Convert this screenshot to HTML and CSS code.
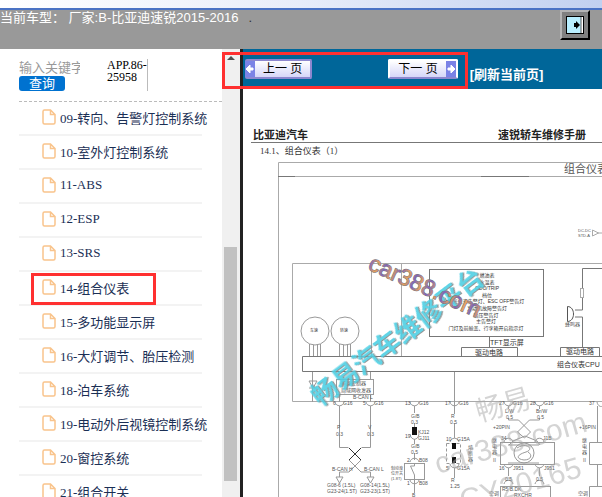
FILE: index.html
```html
<!DOCTYPE html>
<html lang="zh-CN">
  <head>
    <title>比亚迪速锐 - 组合仪表</title>
    <meta charset="UTF-8" />
    <meta name="viewport" content="width=device-width, initial-scale=1.0" />
    <link rel="stylesheet" href="styles.css">
  </head>
  <body>
    <svg width="0" height="0" class="defs">
      <symbol id="file" viewBox="0 0 14 16">
        <path d="M2.5 1h6L13 5.500V13.500a1.500 1.500 0 0 1-1.500 1.500h-9A1.500 1.500 0 0 1 1 13.500v-11A1.500 1.500 0 0 1 2.500 1zM8.500 1v4.500H13" fill="none" stroke="#f9c48c" stroke-width="1.500" />
      </symbol>
    </svg>

    <div class="strip"></div>
    <header class="header">
      <span class="car">当前车型： 厂家:B-比亚迪速锐2015-2016</span>
      <span class="dot">.</span>
      <button class="exit" aria-label="退出">
        <svg width="18" height="18" viewBox="0 0 18 18">
          <rect width="18" height="18" fill="#000" />
          <rect x="1" y="1" width="14" height="16" fill="#b9efff" />
          <rect x="15" y="1" width="2" height="16" fill="#fff" />
          <path d="M15 1v16" stroke="#555" />
          <path d="M8 7h2V5l4 4-4 4v-2H8z" fill="#000" />
        </svg>
      </button>
    </header>

    <div class="frames">
      <aside class="sidebar">
        <div class="menu">
          <form class="search">
            <div class="search-box">
              <input type="text" aria-label="关键字" placeholder="输入关键字" />
              <button type="button">查询</button>
            </div>
            <div class="app">APP.86-<br />25958</div>
          </form>
          <ul class="list">
            <li><a href="#"><svg><use href="#file" /></svg>09-转向、告警灯控制系统</a></li>
            <li><a href="#"><svg><use href="#file" /></svg>10-室外灯控制系统</a></li>
            <li><a href="#"><svg><use href="#file" /></svg>11-ABS</a></li>
            <li><a href="#"><svg><use href="#file" /></svg>12-ESP</a></li>
            <li><a href="#"><svg><use href="#file" /></svg>13-SRS</a></li>
            <li class="marked"><a href="#"><svg><use href="#file" /></svg>14-组合仪表</a></li>
            <li><a href="#"><svg><use href="#file" /></svg>15-多功能显示屏</a></li>
            <li><a href="#"><svg><use href="#file" /></svg>16-大灯调节、胎压检测</a></li>
            <li><a href="#"><svg><use href="#file" /></svg>18-泊车系统</a></li>
            <li><a href="#"><svg><use href="#file" /></svg>19-电动外后视镜控制系统</a></li>
            <li><a href="#"><svg><use href="#file" /></svg>20-窗控系统</a></li>
            <li><a href="#"><svg><use href="#file" /></svg>21-组合开关</a></li>
          </ul>
        </div>
        <div class="scrollbar">
          <div class="arrow"></div>
          <div class="thumb"></div>
        </div>
      </aside>

      <main class="main">
        <nav class="toolbar">
          <button class="page-btn prev">
            <svg width="10" height="16" viewBox="0 0 10 16"><rect width="10" height="16" fill="#7b83e6" /><path d="M1 8l4-4v3h3v2H5v3z" fill="#fff" stroke="#fff" /></svg>
            <span>上一 页</span>
          </button>
          <button class="page-btn next">
            <span>下一 页</span>
            <svg width="10" height="16" viewBox="0 0 10 16"><rect width="10" height="16" fill="#7b83e6" /><path d="M9 8L5 4v3H2v2h3v3z" fill="#fff" stroke="#fff" /></svg>
          </button>
          <a class="refresh" href="#">[刷新当前页]</a>
        </nav>
        <article class="manual">
          <div class="manual-head">
            <span>比亚迪汽车</span>
            <span>速锐轿车维修手册</span>
          </div>
          <h1>14.1、组合仪表（1）</h1>
          <svg class="diagram" width="359" height="340" viewBox="243 157 359 340">
            <!-- frame -->
            <g class="thin">
              <path d="M602 162.500H278.500V497M278 176.500H602" />
              <path d="M278 176.500h17M481 176.500h48" stroke="#777" />
              <path d="M602 263.500H292.500V401.500H602M371.500 263.500V356M401.500 263.500V356" />
              <path d="M602 356.500H302.500V371.500H602" stroke="#777" />
              <rect x="429.500" y="269.500" width="114" height="67" stroke="#777" />
              <path d="M461.500 356V347.500H517.500V356M489.500 337V347M560.500 356V347.500H599.500V356" stroke="#777" />
              <path d="M602 268.500H582.500V288M582.500 297V310M575 310h7.500M575 317h7.500V347" stroke="#777" />
              <rect x="580.500" y="288.500" width="3" height="9" />
              <path d="M567.500 306.500v15M567.500 306.500c8 0 8 15 0 15" stroke="#555" />
              <path d="M592.500 230v6l6-3zM598 233h4" />
            </g>
            <text x="564" y="173" font-size="11">组合仪表</text>
            <g font-size="5">
              <text x="578" y="232" font-size="4">DC-DC</text>
              <text x="578" y="237" font-size="4">STD-A</text>
              <text x="565" y="326">蜂鸣器</text>
            </g>
            <g font-size="5" text-anchor="middle" fill="#333">
              <text x="487" y="277">燃油表</text>
              <text x="487" y="284">水温表</text>
              <text x="487" y="290">ODO/TRIP</text>
              <text x="487" y="297">档位</text>
              <text x="486" y="303">灯光信号告警灯、ESC OFF警告灯</text>
              <text x="487" y="310">发动机故障警告灯</text>
              <text x="486" y="317">胎压警告灯</text>
              <text x="486" y="323">主告警灯</text>
              <text x="486" y="330">门灯及前舱盖、行李箱开启指示灯</text>
            </g>
            <g font-size="7" fill="#333">
              <text x="490" y="345">TFT显示屏</text>
              <text x="475" y="355">驱动电路</text>
              <text x="566" y="354">驱动电路</text>
              <text x="557" y="367">组合仪表CPU</text>
            </g>

            <!-- gauges -->
            <g class="thin dark">
              <circle cx="315" cy="331" r="14" />
              <circle cx="345" cy="331" r="14" />
              <path d="M309.500 344v12M313.500 345v11M317.500 345v11M320.500 344v12M339.500 344v12M343.500 345v11M347.500 345v11M350.500 344v12" />
            </g>
            <g font-size="4" fill="#333">
              <text x="310" y="332">车速</text>
              <text x="340" y="332">转速</text>
            </g>

            <!-- CAN lines -->
            <g class="thin dark">
              <path d="M312.500 372v30M309 381h8l-4 7zM309 388h8M370.500 372v8" />
              <rect x="336.500" y="379.500" width="37" height="15" />
              <path d="M339.500 395v7M370.500 395v7M339.500 406v41.500h9M370.500 406v41.500h-9" />
              <path d="M349 448l12 12-6 6-6-6 12-12" />
              <path d="M349 448l12 12M361 448l-12 12" stroke="#333" />
              <path d="M355 466l-6 6h-9.500v5M355 466l6 6h9.500v5M336 477h7l-3.500 6zM367 477h7l-3.500 6z" />
            </g>
            <g font-size="5">
              <text x="341" y="385">车身控制器</text>
              <text x="341" y="392">局域网收发器</text>
              <text x="353" y="399">B-CAN L</text>
              <text x="333" y="405">6</text><text x="343" y="405">G16</text>
              <text x="363" y="405">5</text><text x="374" y="405">G16</text>
              <text x="337" y="429">P</text><text x="336" y="436">0.3</text>
              <text x="368" y="429">V</text><text x="367" y="436">0.3</text>
              <text x="332" y="471">B-CAN H</text><text x="364" y="471">B-CAN L</text>
              <text x="327" y="487">G08-6 (1.5L)</text><text x="360" y="487">G08-14(1.5L)</text>
              <text x="327" y="493">G23-24(1.5T)</text><text x="360" y="493">G23-23(1.5T)</text>
            </g>

            <!-- switch and fuse branches -->
            <g class="thin dark">
              <path d="M335 402c1 5 8 5 9 0M366 402c1 5 8 5 9 0M410 402c1 5 8 5 9 0M450 402c1 5 8 5 9 0" />
              <path d="M414.500 406v7M414.500 423v4M410 434c1 7 8 7 9 0M414.500 439v5M414.500 453v7M410 462c1-5 8-5 9 0" />
              <rect x="404.500" y="463.500" width="20" height="16" />
              <path d="M414.500 463v3h-4l4 9v9M410 480c1 5 8 5 9 0M414.500 484v9M454.500 372v35M454.500 407v7M454.500 423v15M450 442c1-5 8-5 9 0M450 464c1 5 8 5 9 0M454.500 468v10" />
              <rect x="446.500" y="443.500" width="14" height="20" stroke-dasharray="3 2" />
            </g>
            <path d="M412 427h5v8h-5zM452 443h4v6h-4zM452 457h4v6h-4z" fill="#111" />
            <g font-size="5">
              <text x="405" y="405">13</text><text x="419" y="405">G16</text>
              <text x="411" y="418">G/B</text><text x="411" y="424">0.3</text>
              <text x="418" y="434">KJ12</text><text x="418" y="440">GJ11</text><text x="405" y="438">19</text>
              <text x="411" y="448">G/B</text><text x="411" y="454">0.5</text>
              <text x="407" y="462">2</text><text x="419" y="462">B08</text>
              <g font-size="4">
                <text x="391" y="470">制动液</text><text x="391" y="475">位开关</text><text x="391" y="480">(1.8T)</text>
              </g>
              <text x="407" y="485">1</text><text x="419" y="485">B08</text><text x="412" y="497">B</text>
              <text x="445" y="405">17</text><text x="459" y="405">G16</text>
              <text x="451" y="418">R</text><text x="450" y="424">0.5</text>
              <text x="446" y="441">10</text><text x="457" y="441">G15A</text>
              <text x="446" y="470">5</text><text x="457" y="470">G15A</text>
              <text x="451" y="482">R</text><text x="450" y="488">1.25</text>
              <text x="468" y="449">熔</text><text x="468" y="455">断</text><text x="468" y="461">器</text>
            </g>

            <!-- connector branch -->
            <g class="thin dark">
              <path d="M504 402c1 5 8 5 9 0M535 402c1 5 8 5 9 0M597 402c1 5 5 5 5 4" />
              <path d="M508.500 406v3M539.500 406v3M508.500 418v2h10l12 12-6 6-7-6 12-12h10v-2M525 436l-12 5-4 4M525 436l12 5 3 4" />
              <path d="M504 442c1-5 8-5 9 0M535 442c1-5 8-5 9 0M504 464c1 5 8 5 9 0M535 464c1 5 8 5 9 0M508.500 468v8M539.500 468v8" />
              <rect x="500.500" y="442.500" width="54" height="22" />
              <circle cx="524" cy="453" r="10" />
              <path d="M508 445h31M508 463h31M517 448c9-6 18 1 9 4-10 3-10 7-2 8 7 0 9-5 4-8" />
              <path d="M504 484c1-5 8-5 9 0M535 484c1-5 8-5 9 0" />
              <rect x="500.500" y="486.500" width="50" height="14" />
              <path d="M602 442.500H589.500V464.500H602M602 486.500H589.500V497M597.500 406v36M597.500 465v21" />
            </g>
            <g font-size="5">
              <text x="499" y="405">27</text><text x="513" y="405">G16</text>
              <text x="530" y="405">28</text><text x="544" y="405">G16</text><text x="589" y="405">37</text>
              <text x="505" y="413">L/W</text><text x="506" y="419">0.5</text>
              <text x="536" y="413">Br/W</text><text x="537" y="419">0.5</text>
              <text x="493" y="429">+20PIN</text><text x="579" y="429">+16PIN</text>
              <text x="501" y="440">34</text><text x="543" y="440">J1B</text>
              <text x="492" y="442">继</text><text x="492" y="448">电</text><text x="492" y="454">器</text><text x="493" y="462">II</text>
              <text x="582" y="442">继</text><text x="582" y="448">电</text><text x="582" y="454">器</text><text x="583" y="462">II</text>
              <text x="499" y="470">16</text><text x="513" y="470">J951</text><text x="544" y="470">J951</text>
              <text x="505" y="481">0.5</text><text x="536" y="481">0.5</text>
              <text x="489" y="495">空调</text><text x="578" y="495">空调</text>
              <text x="502" y="491">R5 B.DK</text><text x="514" y="497">RXCHR</text>
            </g>

            <!-- watermarks -->
            <g class="grey-mark">
              <text transform="translate(479 422) rotate(-16)" font-size="28">畅易</text>
              <text transform="translate(438 474) rotate(-16)" font-size="30">car388.com</text>
              <text transform="translate(463 511) rotate(-16)" font-size="30">CY20165</text>
            </g>
            <text class="blue-mark" transform="translate(320 407) rotate(-37)" font-size="26">畅易汽车维修平台</text>
            <text class="site-mark" transform="translate(367 269) rotate(24)" font-size="23">car388.com</text>
            <defs>
              <linearGradient id="rainbow" x2="8" gradientUnits="userSpaceOnUse" spreadMethod="reflect">
                <stop offset="0" stop-color="#7b62c0" />
                <stop offset="1" stop-color="#e8a35a" />
              </linearGradient>
            </defs>
          </svg>
        </article>
      </main>
      <div class="highlight"></div>
    </div>
  </body>
</html>
```

FILE: styles.css
```css
* {
  box-sizing: border-box;
  margin: 0;
  padding: 0;
}
body {
  height: 100vh;
  display: flex;
  flex-direction: column;
  overflow: hidden;
  font-family: "Liberation Serif", "Noto Sans CJK SC", serif;
  font-size: 13px;
  background: #fff;
}
.defs {
  position: absolute;
}
.strip {
  flex: none;
  height: 10px;
  background: linear-gradient(to right, #fff, #e8edfa 50%, #c1d0f0);
  border-bottom: 2px solid #4a72c4;
}
.header {
  flex: none;
  display: flex;
  align-items: flex-start;
  height: 39px;
  padding-right: 12px;
  background: #999;
  color: #fff;
  font-family: "Liberation Sans", "Noto Sans CJK SC", sans-serif;
  line-height: 15px;
}
.dot {
  margin-left: 10px;
  color: #333;
}
.exit {
  display: flex;
  align-items: center;
  justify-content: center;
  width: 30px;
  height: 30px;
  margin-left: auto;
  background: #808080;
  border: 2px solid;
  border-color: #b4b4b4 #000 #000 #b4b4b4;
}
.frames {
  flex: 1;
  display: flex;
  min-height: 0;
  position: relative;
}
.sidebar {
  flex: 0 0 243px;
  min-width: 0;
  display: flex;
  border-right: 3px solid #222;
}
.menu {
  flex: 1;
  min-width: 0;
  padding-left: 19px;
  overflow: hidden;
}
.search {
  display: flex;
  height: 53px;
  padding-top: 10px;
  border-bottom: 1px dashed #bbb;
}
.search-box {
  width: 61px;
  margin-right: 27px;
}
.search input {
  display: block;
  width: 100%;
  height: 17px;
  border: none;
  font: inherit;
  color: #333;
}
.search input::placeholder {
  color: #999;
}
.search button {
  display: block;
  width: 46px;
  height: 15px;
  border: none;
  border-radius: 3px;
  background: #0072d0;
  color: #fff;
  font: inherit;
  line-height: 15px;
}
.app {
  width: 41px;
  height: 32px;
  border-right: 1px solid #bbb;
  font-size: 12px;
  line-height: 12px;
}
.list {
  list-style: none;
  padding-right: 20px;
}
.list li {
  position: relative;
  height: 34px;
  border-bottom: 2px solid #f3f3f3;
}
.list a {
  display: flex;
  align-items: center;
  gap: 4px;
  height: 30px;
  padding-left: 23px;
  color: #1b2f55;
  text-decoration: none;
  white-space: nowrap;
}
.list svg {
  flex: none;
  width: 14px;
  height: 16px;
}
.marked::after {
  content: "";
  box-sizing: border-box;
  position: absolute;
  top: 1px;
  left: 12px;
  width: 125px;
  height: 32px;
  border: 3px solid #ff3030;
}
.scrollbar {
  flex: none;
  display: flex;
  flex-direction: column;
  width: 18px;
  padding: 7px 3px 16px 2px;
  background: #f0f0f0;
}
.arrow {
  margin: 0 auto;
  border: 4px solid transparent;
  border-top: none;
  border-bottom-color: #505050;
}
.thumb {
  height: 55%;
  margin-top: auto;
  background: #c1c1c1;
}
.main {
  flex: 1;
  min-width: 0;
  overflow: hidden;
}
.toolbar {
  display: flex;
  align-items: center;
  height: 40px;
  padding: 0 2px;
  background: #069;
}
.page-btn {
  display: flex;
  align-items: center;
  height: 20px;
  border: 2px solid #8d87cf;
  border-radius: 2px;
  background: linear-gradient(#fff, #d5d6f8);
  color: #000;
  font-family: "Liberation Sans", "Noto Sans CJK SC", sans-serif;
  font-size: 12px;
  line-height: 16px;
  white-space: nowrap;
}
.page-btn svg {
  flex: none;
}
.page-btn span {
  padding: 0 8px;
}
.prev {
  border-left-width: 0;
}
.next {
  margin-left: 76px;
  border-color: #fff #fff #8d87cf;
}
.refresh {
  margin: 8px 0 0 12px;
  color: #fff;
  font-family: "Liberation Sans", "Noto Sans CJK SC", sans-serif;
  font-size: 13px;
  font-weight: bold;
  text-decoration: none;
  white-space: nowrap;
}
.manual {
  padding-top: 37px;
}
.manual-head {
  display: flex;
  justify-content: space-between;
  height: 17px;
  margin-left: 8px;
  padding: 0 16px 0 2px;
  border-bottom: 1px solid #777;
  color: #222;
  font-size: 11px;
  font-weight: bold;
  line-height: 18px;
}
.manual h1 {
  height: 14px;
  padding-left: 17px;
  color: #333;
  font-size: 9px;
  font-weight: 400;
  line-height: 16px;
}
.diagram {
  display: block;
  fill: #555;
  font-family: "Liberation Sans", "Noto Sans CJK SC", sans-serif;
}
.thin {
  fill: none;
  stroke: #aaa;
}
.dark {
  stroke: #999;
}
.grey-mark {
  fill: #aaa;
  opacity: 0.5;
}
.blue-mark {
  fill: #4fd0e4;
  font-weight: bold;
  opacity: 0.9;
  filter: drop-shadow(1px 1px 0 #888);
}
.site-mark {
  fill: url(#rainbow);
  stroke: #777;
  stroke-width: 1px;
  paint-order: stroke;
}
.highlight {
  position: absolute;
  top: 3px;
  left: 222px;
  width: 246px;
  height: 37px;
  border: 3px solid #ff3030;
}
```
